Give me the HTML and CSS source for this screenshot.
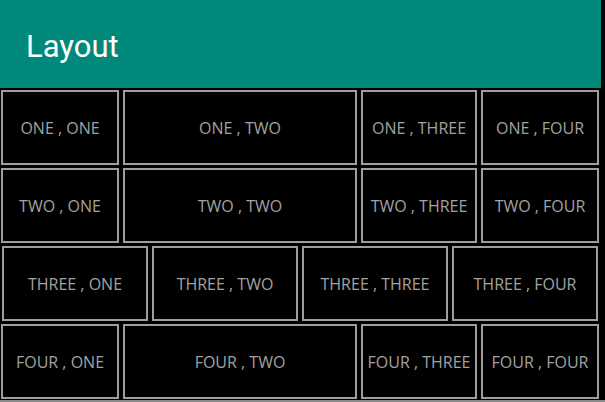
FILE: index.html
```html
<!DOCTYPE html>
<html>
<head>
<meta charset="utf-8">
<link rel="stylesheet" href="styles.css">
</head>
<body>
<div class="app">
  <header class="bar"><h1 class="title">Layout</h1></header>
  <main class="table">
    <div class="row row-a">
      <div class="cell">ONE , ONE</div>
      <div class="cell">ONE , TWO</div>
      <div class="cell">ONE , THREE</div>
      <div class="cell">ONE , FOUR</div>
    </div>
    <div class="row row-a">
      <div class="cell">TWO , ONE</div>
      <div class="cell">TWO , TWO</div>
      <div class="cell">TWO , THREE</div>
      <div class="cell">TWO , FOUR</div>
    </div>
    <div class="row row-b">
      <div class="cell">THREE , ONE</div>
      <div class="cell">THREE , TWO</div>
      <div class="cell">THREE , THREE</div>
      <div class="cell">THREE , FOUR</div>
    </div>
    <div class="row row-a">
      <div class="cell">FOUR , ONE</div>
      <div class="cell">FOUR , TWO</div>
      <div class="cell">FOUR , THREE</div>
      <div class="cell">FOUR , FOUR</div>
    </div>
  </main>
  <div class="edge"></div>
</div>
</body>
</html>
```
FILE: styles.css
```css
html, body {
  margin: 0;
  padding: 0;
  background: #000;
}
.app {
  width: 605px;
  height: 402px;
  overflow: hidden;
  background: #000;
  font-family: Roboto, "Liberation Sans", sans-serif;
}
.bar {
  width: 601px;
  height: 88px;
  background: #00897b;
  display: flex;
  align-items: center;
  box-sizing: border-box;
  padding-left: 26px;
}
.title {
  margin: 0;
  color: #fff;
  font-weight: 400;
  font-size: 31px;
  line-height: 1;
  padding-top: 5px;
}
.table {
  margin-top: 2px;
  display: flex;
  flex-direction: column;
  gap: 3px;
}
.row {
  display: grid;
  height: 75px;
  column-gap: 4px;
}
.row-a {
  grid-template-columns: 118px 234px 116px 118px;
  padding-left: 1px;
}
.row-b {
  grid-template-columns: 146px 146px 146px 146px;
  padding-left: 2px;
}
.cell {
  box-sizing: border-box;
  border: 2px solid #9e9e9e;
  display: flex;
  align-items: center;
  justify-content: center;
  color: #a2a2a2;
  font-family: "Open Sans", "DejaVu Sans", sans-serif;
  font-size: 16px;
  white-space: nowrap;
}
.edge {
  margin-top: 1px;
  height: 2px;
  background: #8a8a8a;
}
```
